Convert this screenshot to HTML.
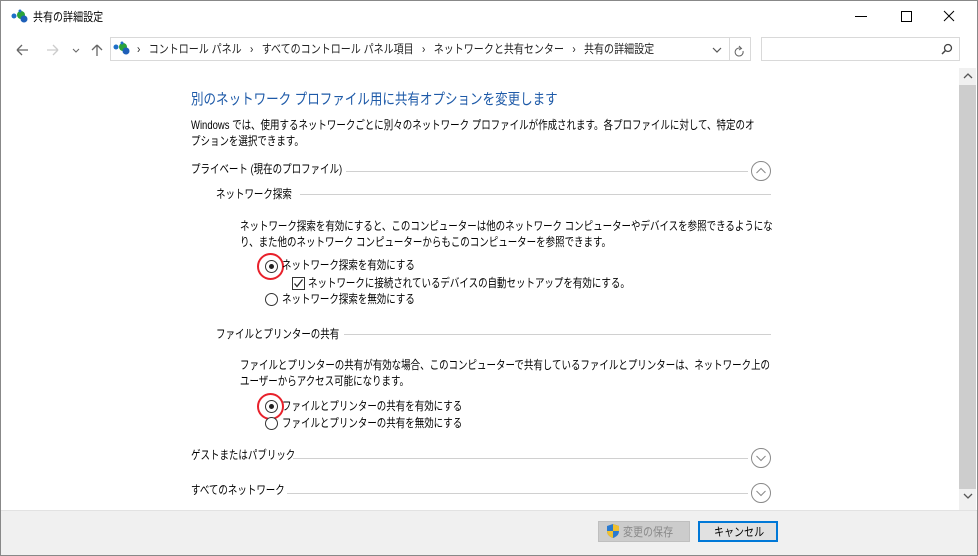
<!DOCTYPE html>
<html><head><meta charset="utf-8"><style>
*{margin:0;padding:0;box-sizing:border-box}
body{width:978px;height:556px;position:relative;overflow:hidden;background:#fff;font-family:"Liberation Sans","Noto Sans CJK JP",sans-serif;font-size:12px;color:#000}
.a{position:absolute;white-space:nowrap;line-height:16px;transform-origin:0 50%}
.s{transform:scaleX(0.79)}
.h{transform:scaleX(0.835)}
.ln{position:absolute;height:1px;background:#d0d0d0}
.radio{position:absolute;width:13px;height:13px;border:1px solid #333;border-radius:50%;background:#fff}
.radio.on::after{content:"";position:absolute;left:3px;top:3px;width:5px;height:5px;border-radius:50%;background:#222}
.red{position:absolute;width:27px;height:27px;border:2.5px solid #e8212b;border-radius:50%}
</style></head><body>
<div style="position:absolute;left:0;top:0;width:978px;height:556px;border:1px solid #888"></div>
<svg class="a" style="left:11px;top:9px" width="20" height="16"><circle cx="3" cy="7" r="2.5" fill="#1e6fc8"/><circle cx="10" cy="6" r="4" fill="#2aa33a"/><circle cx="13" cy="10" r="3.5" fill="#1e5fb8"/><circle cx="9" cy="2" r="1.5" fill="#1e6fc8"/></svg>
<div class="a h" style="left:33px;top:9px">共有の詳細設定</div>
<svg style="position:absolute;left:840px;top:6px" width="130" height="20"><path d="M15 10.5H27" stroke="#000"/><rect x="61.5" y="5.5" width="10" height="10" fill="none" stroke="#000"/><path d="M104 5L114 15M114 5L104 15" stroke="#000"/></svg>
<svg style="position:absolute;left:14px;top:42px" width="100" height="16"><path d="M3 8H14M3 8L8 3M3 8L8 13" stroke="#666" stroke-width="1.3" fill="none"/><path d="M33 8H44M44 8L39 3M44 8L39 13" stroke="#ccc" stroke-width="1.3" fill="none"/><path d="M59 7L62 10L65 7" stroke="#666" fill="none"/><path d="M83 14V3M83 3L78 8M83 3L88 8" stroke="#666" stroke-width="1.3" fill="none"/></svg>
<div style="position:absolute;left:110px;top:37px;width:620px;height:24px;border:1px solid #d9d9d9"></div>
<div style="position:absolute;left:729px;top:37px;width:22px;height:24px;border:1px solid #d9d9d9"></div>
<svg class="a" style="left:113px;top:41px" width="18" height="16"><circle cx="3" cy="6" r="2.5" fill="#1e6fc8"/><circle cx="10" cy="6" r="4" fill="#2aa33a"/><circle cx="13" cy="10" r="3.5" fill="#1e5fb8"/><circle cx="9" cy="2" r="1.5" fill="#1e6fc8"/></svg>
<div class="a h" style="left:137px;top:41px;color:#222">›&nbsp;&nbsp; コントロール パネル &nbsp;&nbsp;›&nbsp;&nbsp; すべてのコントロール パネル項目 &nbsp;&nbsp;›&nbsp;&nbsp; ネットワークと共有センター &nbsp;&nbsp;›&nbsp;&nbsp; 共有の詳細設定</div>
<svg style="position:absolute;left:712px;top:45px" width="40" height="12"><path d="M1 3L5 7L9 3" stroke="#555" fill="none" stroke-width="1.2"/><path d="M29 3.5A4 4 0 1 0 31 6" stroke="#666" fill="none"/><path d="M27 1L29.5 3.5L27 5" stroke="#666" fill="none"/></svg>
<div style="position:absolute;left:761px;top:37px;width:199px;height:24px;border:1px solid #d9d9d9"></div>
<svg style="position:absolute;left:941px;top:43px" width="12" height="12"><circle cx="7" cy="5" r="3.5" stroke="#444" fill="none" stroke-width="1.3"/><path d="M4.5 7.5L1 11" stroke="#444" stroke-width="1.5"/></svg>
<div style="position:absolute;left:959px;top:68px;width:17px;height:442px;background:#f0f0f0"></div>
<div style="position:absolute;left:959px;top:85px;width:17px;height:404px;background:#cdcdcd"></div>
<svg style="position:absolute;left:963px;top:72px" width="10" height="430"><path d="M1 6L5 2L9 6" stroke="#555" fill="none" stroke-width="1.3"/><path d="M1 422L5 426L9 422" stroke="#555" fill="none" stroke-width="1.3"/></svg>
<div class="a h" style="left:191px;top:91px;font-size:15px;line-height:18px;color:#1e5aa8">別のネットワーク プロファイル用に共有オプションを変更します</div>
<div class="a s" style="left:191px;top:117px">Windows では、使用するネットワークごとに別々のネットワーク プロファイルが作成されます。各プロファイルに対して、特定のオ</div>
<div class="a s" style="left:191px;top:133px">プションを選択できます。</div>
<div class="a s" style="left:191px;top:161px">プライベート (現在のプロファイル)</div>
<div class="ln" style="left:346px;top:171px;width:402px"></div>
<svg style="position:absolute;left:750px;top:160px" width="22" height="22"><circle cx="11" cy="11" r="9.5" stroke="#8a8a8a" fill="none"/><path d="M6.5 13L11 8.5L15.5 13" stroke="#888" fill="none"/></svg>
<div class="a s" style="left:216px;top:186px">ネットワーク探索</div>
<div class="ln" style="left:300px;top:194px;width:471px"></div>
<div class="a s" style="left:240px;top:218px">ネットワーク探索を有効にすると、このコンピューターは他のネットワーク コンピューターやデバイスを参照できるようにな</div>
<div class="a s" style="left:240px;top:234px">り、また他のネットワーク コンピューターからもこのコンピューターを参照できます。</div>
<div class="radio on" style="left:265px;top:260px"></div>
<div class="red" style="left:257px;top:253px"></div>
<div class="a s" style="left:282px;top:257px">ネットワーク探索を有効にする</div>
<div style="position:absolute;left:292px;top:277px;width:13px;height:13px;border:1px solid #333"></div>
<svg style="position:absolute;left:292px;top:277px" width="13" height="13"><path d="M2.5 6.5L5 9.5L10.5 2.5" stroke="#222" fill="none" stroke-width="1.2"/></svg>
<div class="a s" style="left:308px;top:275px">ネットワークに接続されているデバイスの自動セットアップを有効にする。</div>
<div class="radio" style="left:265px;top:293px"></div>
<div class="a s" style="left:282px;top:291px">ネットワーク探索を無効にする</div>
<div class="a s" style="left:216px;top:326px">ファイルとプリンターの共有</div>
<div class="ln" style="left:344px;top:334px;width:427px"></div>
<div class="a s" style="left:240px;top:357px">ファイルとプリンターの共有が有効な場合、このコンピューターで共有しているファイルとプリンターは、ネットワーク上の</div>
<div class="a s" style="left:240px;top:373px">ユーザーからアクセス可能になります。</div>
<div class="radio on" style="left:265px;top:400px"></div>
<div class="red" style="left:257px;top:393px"></div>
<div class="a s" style="left:282px;top:398px">ファイルとプリンターの共有を有効にする</div>
<div class="radio" style="left:265px;top:417px"></div>
<div class="a s" style="left:282px;top:415px">ファイルとプリンターの共有を無効にする</div>
<div class="a s" style="left:191px;top:447px">ゲストまたはパブリック</div>
<div class="ln" style="left:293px;top:458px;width:455px"></div>
<svg style="position:absolute;left:750px;top:447px" width="22" height="22"><circle cx="11" cy="11" r="9.5" stroke="#8a8a8a" fill="none"/><path d="M6.5 9L11 13.5L15.5 9" stroke="#888" fill="none"/></svg>
<div class="a s" style="left:191px;top:482px">すべてのネットワーク</div>
<div class="ln" style="left:287px;top:493px;width:461px"></div>
<svg style="position:absolute;left:750px;top:482px" width="22" height="22"><circle cx="11" cy="11" r="9.5" stroke="#8a8a8a" fill="none"/><path d="M6.5 9L11 13.5L15.5 9" stroke="#888" fill="none"/></svg>
<div style="position:absolute;left:1px;top:510px;width:976px;height:45px;background:#f0f0f0;border-top:1px solid #e2e2e2"></div>
<div style="position:absolute;left:598px;top:521px;width:92px;height:21px;background:#ccc;border:1px solid #bfbfbf"></div>
<svg class="a" style="left:606px;top:523px" width="14" height="16"><path d="M7 1 L13 3 V8 C13 12 10 14 7 15 C4 14 1 12 1 8 V3Z" fill="#2a7ad0"/><path d="M7 1 V8 H13 V3Z M1 8 H7 V15 C4 14 1 12 1 8Z" fill="#f0c030"/></svg>
<div class="a h" style="left:623px;top:524px;color:#8a8a8a">変更の保存</div>
<div style="position:absolute;left:698px;top:521px;width:80px;height:21px;background:#e1e1e1;border:2px solid #0078d7"></div>
<div class="a h" style="left:714px;top:524px">キャンセル</div>
</body></html>
